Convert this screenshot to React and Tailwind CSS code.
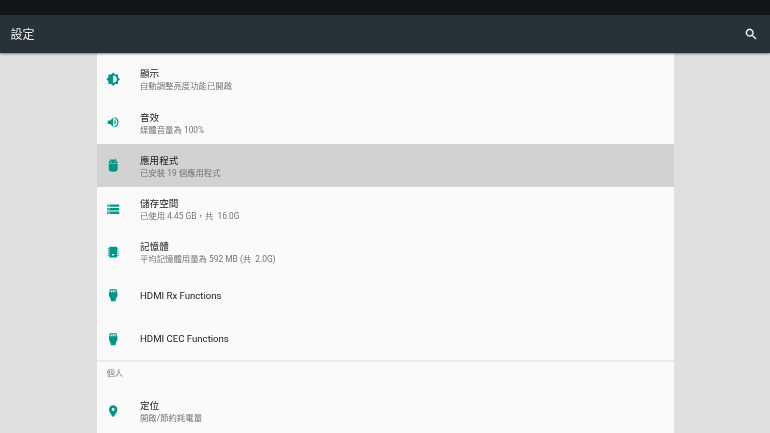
import React from "react";

const teal = "#009688";

const BrightnessIcon = () => (
  <svg viewBox="0 0 24 24" className="w-[14.4px] h-[14.4px]" fill={teal}>
    <path d="M20 15.31L23.31 12 20 8.69V4h-4.69L12 .69 8.69 4H4v4.69L.69 12 4 15.31V20h4.69L12 23.31 15.31 20H20v-4.69zM12 18V6c3.31 0 6 2.69 6 6s-2.69 6-6 6z" />
  </svg>
);

const VolumeIcon = () => (
  <svg viewBox="0 0 24 24" className="w-[14.4px] h-[14.4px]" fill={teal}>
    <path d="M3 9v6h4l5 5V4L7 9H3zm13.5 3c0-1.77-1.02-3.29-2.5-4.03v8.05c1.48-.73 2.5-2.25 2.5-4.02zM14 3.23v2.06c2.89.86 5 3.54 5 6.71s-2.11 5.85-5 6.71v2.06c4.01-.91 7-4.49 7-8.77s-2.99-7.86-7-8.77z" />
  </svg>
);

const AndroidIcon = () => (
  <svg viewBox="0 0 24 24" className="w-[14.4px] h-[14.4px]" fill={teal}>
    <path
      fillRule="evenodd"
      d="M4.5 10.2h15V17a6 6 0 0 1-6 6h-3a6 6 0 0 1-6-6v-6.8zM4.5 9.2C4.5 6.6 6 4.6 8 3.5L6.6 1.6l.9-.6 1.6 2c1.8-.7 4-.7 5.8 0l1.6-2 .9.6L16 3.5c2 1.1 3.5 3.1 3.5 5.7h-15zM8 5.6h1.6v1.6H8V5.6zm6.4 0H16v1.6h-1.6V5.6z"
    />
  </svg>
);

const StorageIcon = () => (
  <svg viewBox="0 0 24 24" className="w-[14.4px] h-[14.4px]" fill={teal}>
    <path d="M2 20h20v-4H2v4zm2-3h2v2H4v-2zM2 4v4h20V4H2zm4 3H4V5h2v2zm-4 7h20v-4H2v4zm2-3h2v2H4v-2z" />
  </svg>
);

const MemoryIcon = () => (
  <svg viewBox="0 0 24 24" className="w-[14.4px] h-[14.4px]" fill={teal}>
    <path
      fillRule="evenodd"
      d="M5.5 3h13v18h-13V3zm5 12v2.4h3V15h-3zM3 5.5h2v1.6H3V5.5zm0 3.7h2v1.6H3V9.2zm0 3.8h2v1.6H3V13zm0 3.7h2v1.6H3v-1.6zm16-11.2h2v1.6h-2V5.5zm0 3.7h2v1.6h-2V9.2zm0 3.8h2v1.6h-2V13zm0 3.7h2v1.6h-2v-1.6z"
    />
  </svg>
);

const HdmiIcon = () => (
  <svg viewBox="0 0 24 24" className="w-[14.4px] h-[14.4px]" fill={teal}>
    <path d="M18 7V4c0-1.1-.9-2-2-2H8c-1.1 0-2 .9-2 2v3H5v6l3 6v3h8v-3l3-6V7h-1zM8 4h8v3h-2V5h-1v2h-2V5h-1v2H8V4z" />
  </svg>
);

const PlaceIcon = () => (
  <svg viewBox="0 0 24 24" className="w-[14.4px] h-[14.4px]" fill={teal}>
    <path d="M12 2C8.13 2 5 5.13 5 9c0 5.25 7 13 7 13s7-7.75 7-13c0-3.87-3.13-7-7-7zm0 9.5c-1.38 0-2.5-1.12-2.5-2.5s1.12-2.5 2.5-2.5 2.5 1.12 2.5 2.5-1.12 2.5-2.5 2.5z" />
  </svg>
);

const Row = ({ icon, title, summary, selected }) => (
  <div className={`flex items-center h-[43.3px] shrink-0 ${selected ? "bg-[#d2d2d2]" : ""}`}>
    <div className="w-[43px] pl-[9px] shrink-0 flex items-center">{icon}</div>
    <div className={`flex flex-col ${summary ? "pt-[1.5px]" : ""}`}>
      <div className="text-[9.6px] leading-[13px] text-[#212121]">{title}</div>
      {summary && <div className="text-[8.4px] leading-[12px] text-[#747474] whitespace-pre">{summary}</div>}
    </div>
  </div>
);

export default function App() {
  return (
    <div
      className="w-[770px] h-[433px] overflow-hidden flex flex-col bg-[#e0e0e0] blur-[0.3px]"
      style={{ fontFamily: 'Roboto, "Noto Sans CJK TC", sans-serif' }}
    >
      <div className="h-[14.5px] shrink-0 bg-[#101517]" />
      <div className="h-[38.5px] shrink-0 flex items-center justify-between pl-[10.5px] pr-[12px] bg-[#263238] shadow-[0_1px_2px_rgba(0,0,0,0.45)] relative">
        <span className="text-[12px] text-[#f0f2f2] pt-[2px]">設定</span>
        <svg viewBox="0 0 24 24" className="w-[14.4px] h-[14.4px]" fill="#f2f4f4" stroke="#f2f4f4" strokeWidth="0.5">
          <path d="M15.5 14h-.79l-.28-.27C15.41 12.59 16 11.11 16 9.5 16 5.91 13.09 3 9.5 3S3 5.91 3 9.5 5.91 16 9.5 16c1.61 0 3.09-.59 4.23-1.57l.27.28v.79l5 4.99L20.49 19l-4.99-5zm-6 0C7.01 14 5 11.99 5 9.5S7.01 5 9.5 5 14 7.01 14 9.5 11.99 14 9.5 14z" />
        </svg>
      </div>
      <div className="w-[577px] ml-[97px] flex-1 flex flex-col pt-[4.4px] bg-[#fafafa] overflow-hidden">
        <Row icon={<BrightnessIcon />} title="顯示" summary="自動調整亮度功能已開啟" />
        <Row icon={<VolumeIcon />} title="音效" summary="媒體音量為 100%" />
        <Row icon={<AndroidIcon />} title="應用程式" summary="已安裝 19 個應用程式" selected />
        <Row icon={<StorageIcon />} title="儲存空間" summary="已使用 4.45 GB，共  16.0G" />
        <Row icon={<MemoryIcon />} title="記憶體" summary="平均記憶體用量為 592 MB (共  2.0G)" />
        <Row icon={<HdmiIcon />} title="HDMI Rx Functions" />
        <Row icon={<HdmiIcon />} title="HDMI CEC Functions" />
        <div className="h-[1.5px] shrink-0 bg-[#eaeaea]" />
        <div className="h-[27.5px] shrink-0 flex items-center pl-[9.5px] pb-[4px] text-[8.4px] text-[#7f7f7f]">個人</div>
        <Row icon={<PlaceIcon />} title="定位" summary="開啟/節約耗電量" />
      </div>
    </div>
  );
}
